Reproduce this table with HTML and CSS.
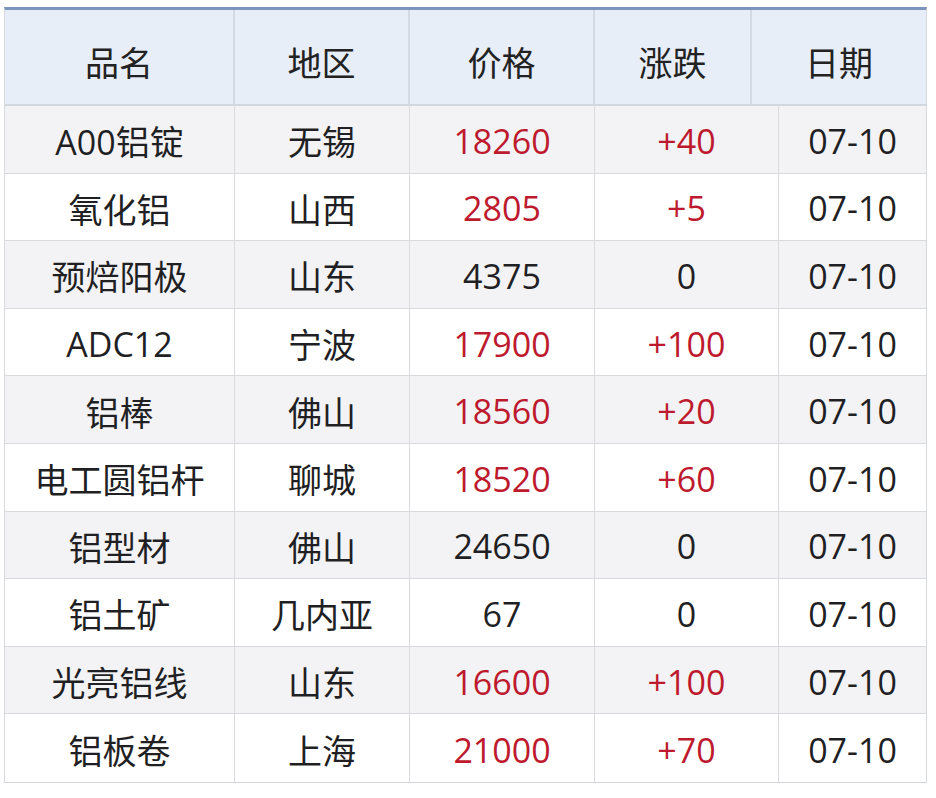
FILE: index.html
```html
<!DOCTYPE html>
<html lang="zh">
<head>
<meta charset="utf-8">
<link rel="stylesheet" href="styles.css">
</head>
<body>
<div class="table">
  <div class="head">
    <div class="hc">品名</div>
    <div class="hc">地区</div>
    <div class="hc">价格</div>
    <div class="hc">涨跌</div>
    <div class="hc last">日期</div>
  </div>
  <div class="body">
    <div class="row odd"><div class="c">A00铝锭</div><div class="c">无锡</div><div class="c red">18260</div><div class="c red">+40</div><div class="c last">07-10</div></div>
    <div class="row"><div class="c">氧化铝</div><div class="c">山西</div><div class="c red">2805</div><div class="c red">+5</div><div class="c last">07-10</div></div>
    <div class="row odd"><div class="c">预焙阳极</div><div class="c">山东</div><div class="c">4375</div><div class="c">0</div><div class="c last">07-10</div></div>
    <div class="row"><div class="c">ADC12</div><div class="c">宁波</div><div class="c red">17900</div><div class="c red">+100</div><div class="c last">07-10</div></div>
    <div class="row odd"><div class="c">铝棒</div><div class="c">佛山</div><div class="c red">18560</div><div class="c red">+20</div><div class="c last">07-10</div></div>
    <div class="row"><div class="c">电工圆铝杆</div><div class="c">聊城</div><div class="c red">18520</div><div class="c red">+60</div><div class="c last">07-10</div></div>
    <div class="row odd"><div class="c">铝型材</div><div class="c">佛山</div><div class="c">24650</div><div class="c">0</div><div class="c last">07-10</div></div>
    <div class="row"><div class="c">铝土矿</div><div class="c">几内亚</div><div class="c">67</div><div class="c">0</div><div class="c last">07-10</div></div>
    <div class="row odd"><div class="c">光亮铝线</div><div class="c">山东</div><div class="c red">16600</div><div class="c red">+100</div><div class="c last">07-10</div></div>
    <div class="row last-row"><div class="c">铝板卷</div><div class="c">上海</div><div class="c red">21000</div><div class="c red">+70</div><div class="c last">07-10</div></div>
  </div>
</div>
</body>
</html>
```

FILE: styles.css
```css
html, body {
  margin: 0;
  padding: 0;
  background: #ffffff;
}
body {
  padding: 7px 0 0 4px;
  font-family: "Open Sans", "Noto Sans CJK SC", sans-serif;
  color: #1f1f24;
}
.table {
  width: 923px;
  border-top: 3px solid #7d94bd;
  border-left: 1px solid #d6d9de;
  border-right: 1px solid #d6d9de;
  border-bottom: 1px solid #d2d4d8;
  box-sizing: border-box;
}
.head {
  display: grid;
  grid-template-columns: 230px 175px 185px 157px 1fr;
  height: 96px;
  background: #e8eef8;
  border-bottom: 2px solid #d3d8df;
  box-sizing: border-box;
}
.hc {
  display: flex;
  align-items: center;
  justify-content: center;
  padding-top: 8px;
  font-size: 34px;
  border-right: 2px solid #d4dae3;
  color: #222;
}
.hc.last, .c.last {
  border-right: none;
}
.row {
  display: grid;
  grid-template-columns: 230px 175px 185px 184px 1fr;
  height: 67.6px;
  border-bottom: 1px solid #d9dadd;
  box-sizing: border-box;
  background: #ffffff;
}
.row.odd {
  background: #f3f3f6;
}
.row.last-row {
  border-bottom: none;
}
.c {
  display: flex;
  align-items: center;
  justify-content: center;
  padding-top: 3px;
  font-size: 34px;
  border-right: 1px solid #d9dadd;
  color: #1f1f24;
}
.c.red {
  color: #be1a2e;
}
```
